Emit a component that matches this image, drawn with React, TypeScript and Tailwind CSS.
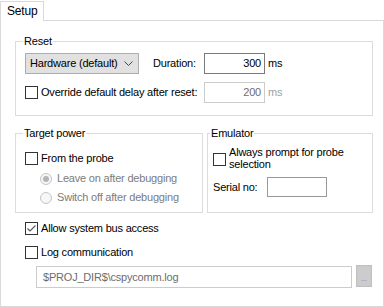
import React from "react";

function CheckBox({ checked = false }: { checked?: boolean }) {
  return (
    <span className="w-[13px] h-[13px] shrink-0 border border-[#333333] bg-white flex items-center justify-center">
      {checked && (
        <svg width="11" height="11" viewBox="0 0 11 11">
          <polyline points="1.5,5.5 4,8 9.5,2.5" fill="none" stroke="#5a5a5a" strokeWidth="1.2" />
        </svg>
      )}
    </span>
  );
}

function Radio({ selected = false }: { selected?: boolean }) {
  return (
    <span className="w-[12px] h-[12px] shrink-0 rounded-full border border-[#c4c4c4] bg-[#f7f7f7] flex items-center justify-center">
      {selected && <span className="w-[6px] h-[6px] rounded-full bg-[#b4b4b4]" />}
    </span>
  );
}

function GroupBox({
  title,
  className,
  children,
  legendLeft,
}: {
  title: string;
  className: string;
  children: React.ReactNode;
  legendLeft: string;
}) {
  return (
    <div className={"relative border border-[#dcdcdc] " + className}>
      <span className={"absolute -top-[8px] bg-white px-px leading-[14px] " + legendLeft}>
        {title}
      </span>
      {children}
    </div>
  );
}

export default function App() {
  return (
    <div className="w-[384px] h-[307px] overflow-hidden bg-white text-black text-[11px] tracking-[-0.2px] font-['Liberation_Sans',Arial,sans-serif] flex flex-col">
      {/* tab strip */}
      <div className="h-[20px] shrink-0 pt-px flex">
        <div className="relative z-10 h-[20px] w-[44px] bg-white border-x border-t border-[#d9d9d9] pl-[6px] pt-[2px] leading-[14px] text-[12px]">
          Setup
        </div>
      </div>

      {/* tab page */}
      <div className="flex-1 border border-[#d9d9d9] pl-[14px] pr-[10px]">
        <GroupBox title="Reset" className="mt-[20px] h-[75px] pl-[9px] pt-[11px]" legendLeft="left-[7px]">
          <div className="flex items-center h-[21px]">
            <div className="w-[114px] h-[21px] bg-[#e1e1e1] border border-[#adadad] flex items-center justify-between pl-[4px] pr-[5px]">
              <span>Hardware (default)</span>
              <svg width="9" height="5" viewBox="0 0 9 5">
                <path d="M0.5 0.5 L4.5 4.5 L8.5 0.5" fill="none" stroke="#444" strokeWidth="1" />
              </svg>
            </div>
            <span className="ml-[14px] w-[51px]">Duration:</span>
            <div className="w-[61px] h-[21px] border border-[#7a7a7a] text-right pr-[3px] leading-[19px]">
              300
            </div>
            <span className="ml-[3px]">ms</span>
          </div>
          <div className="flex items-center h-[21px] mt-[8px]">
            <div className="w-[179px] flex items-center gap-[3px]">
              <CheckBox />
              <span className="whitespace-nowrap">Override default delay after reset:</span>
            </div>
            <div className="w-[61px] h-[21px] border border-[#cccccc] text-right pr-[3px] leading-[19px] text-[#6d6d6d]">
              200
            </div>
            <span className="ml-[3px] text-[#a0a0a0]">ms</span>
          </div>
        </GroupBox>

        <div className="mt-[17px] h-[80px] flex gap-[4px]">
          <GroupBox title="Target power" className="w-[188px] pl-[9px] pt-[18px]" legendLeft="left-[7px]">
            <div className="flex items-center gap-[3px] h-[13px]">
              <CheckBox />
              <span>From the probe</span>
            </div>
            <div className="mt-[4px] ml-[15px] h-[19px] flex items-center gap-[5px] text-[#7c7c7c]">
              <Radio selected />
              <span>Leave on after debugging</span>
            </div>
            <div className="ml-[15px] h-[19px] flex items-center gap-[5px] text-[#7c7c7c]">
              <Radio />
              <span>Switch off after debugging</span>
            </div>
          </GroupBox>

          <GroupBox title="Emulator" className="w-[166px] pl-[5px] pt-[12px]" legendLeft="left-[2px]">
            <div className="flex items-start gap-[3px]">
              <span className="mt-[7px]">
                <CheckBox />
              </span>
              <span className="leading-[12px]">
                Always prompt for probe
                <br />
                selection
              </span>
            </div>
            <div className="mt-[7px] flex items-center">
              <span className="w-[54px]">Serial no:</span>
              <div className="w-[60px] h-[20px] border border-[#999999] bg-white" />
            </div>
          </GroupBox>
        </div>

        <div className="mt-[9px] flex items-center gap-[3px] pl-[10px] h-[13px]">
          <CheckBox checked />
          <span>Allow system bus access</span>
        </div>
        <div className="mt-[11px] flex items-center gap-[3px] pl-[10px] h-[13px]">
          <CheckBox />
          <span>Log communication</span>
        </div>
        <div className="mt-[7px] pl-[21px] flex items-start gap-[4px]">
          <div className="w-[316px] h-[22px] border border-[#cccccc] pl-[6px] leading-[20px] text-[#6d6d6d]">
            $PROJ_DIR$\cspycomm.log
          </div>
          <div className="-mt-px w-[16px] h-[22px] bg-[#cccccc] border border-[#bfbfbf] flex items-end justify-center pb-[3px] text-[8px] leading-[8px] text-[#8a8a8a]">
            ...
          </div>
        </div>
      </div>
    </div>
  );
}
